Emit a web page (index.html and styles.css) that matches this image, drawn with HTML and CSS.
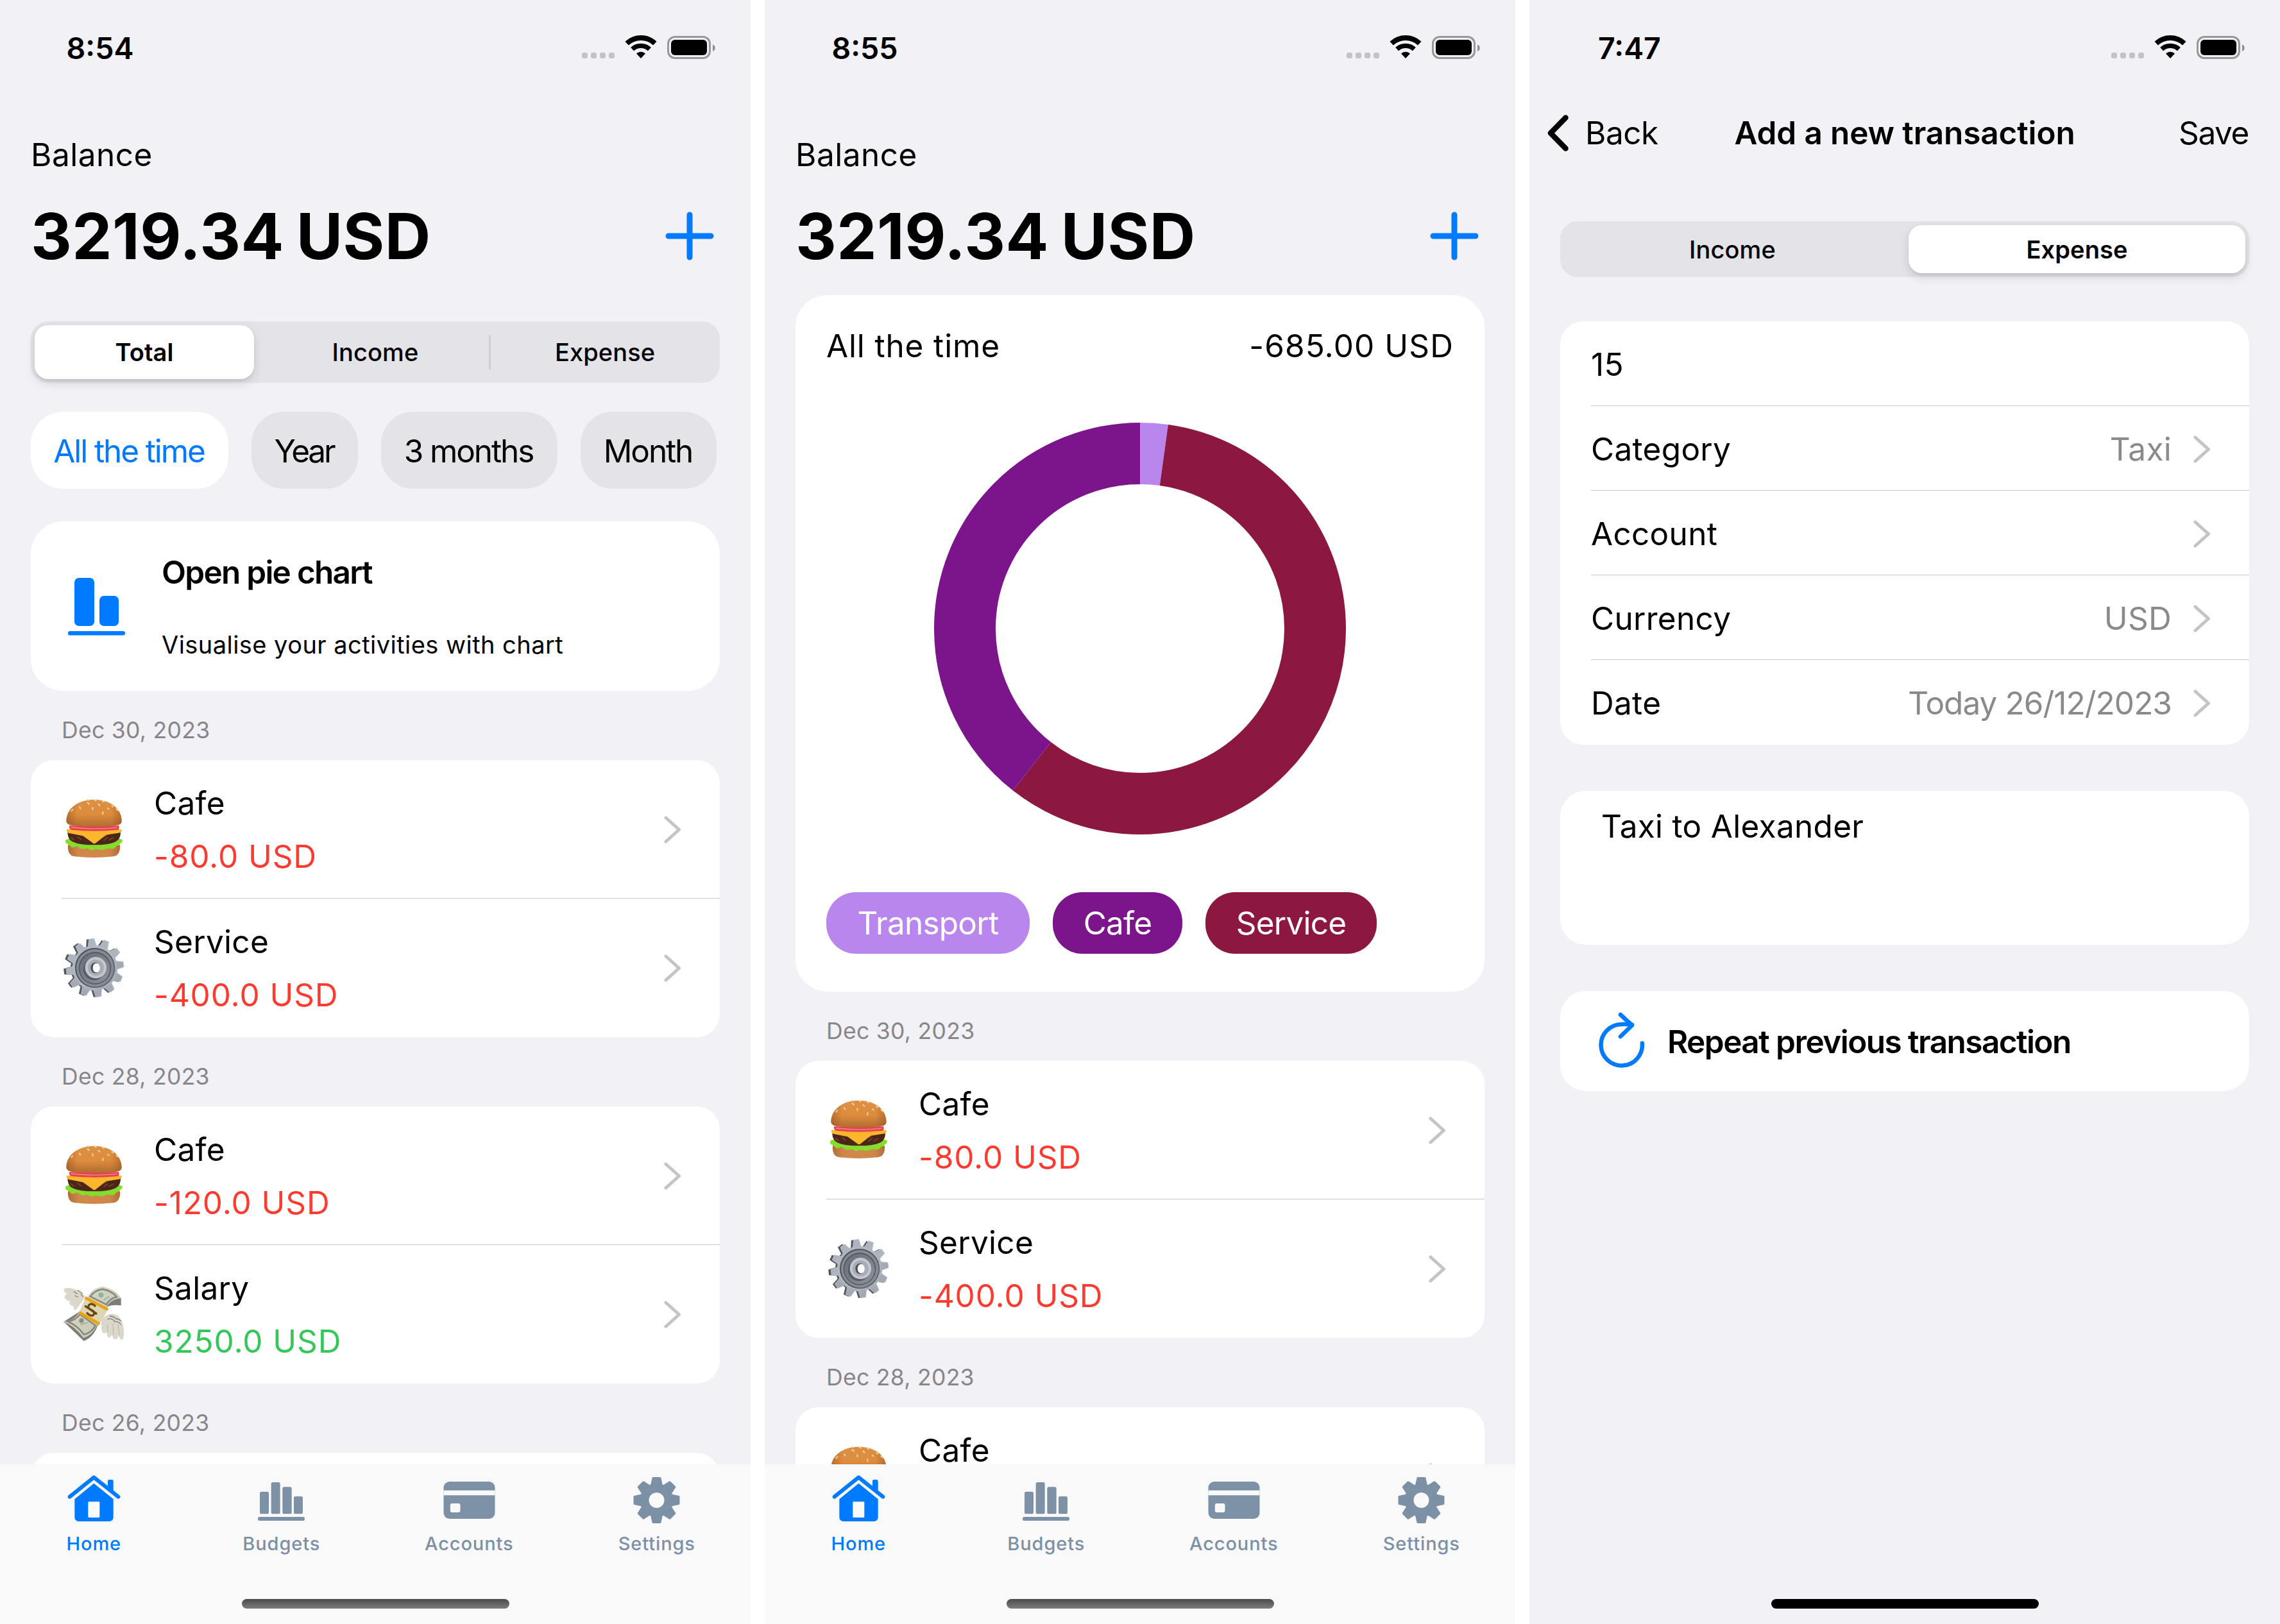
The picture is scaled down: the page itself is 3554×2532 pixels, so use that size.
FILE: index.html
```html
<!DOCTYPE html>
<html lang="en">
<head>
<meta charset="utf-8">
<title>Balance</title>
<link rel="stylesheet" href="styles.css">
</head>
<body>
<svg class="defs" width="0" height="0" aria-hidden="true">
  <defs>
    <linearGradient id="bun" x1="0" y1="0" x2="0" y2="1"><stop offset="0" stop-color="#dc9044"/><stop offset=".55" stop-color="#de8c3c"/><stop offset="1" stop-color="#b06c32"/></linearGradient>
    <linearGradient id="bunSide" x1="0" y1="0" x2="1" y2="0"><stop offset="0" stop-color="#8a4a1c" stop-opacity=".45"/><stop offset=".2" stop-color="#8a4a1c" stop-opacity="0"/><stop offset=".8" stop-color="#8a4a1c" stop-opacity="0"/><stop offset="1" stop-color="#8a4a1c" stop-opacity=".45"/></linearGradient>
    <linearGradient id="steel" x1="0" y1="0" x2="1" y2="1"><stop offset="0" stop-color="#a3adb6"/><stop offset=".5" stop-color="#b4bac3"/><stop offset="1" stop-color="#8f949e"/></linearGradient>
    <linearGradient id="dish" x1="0" y1="0" x2="1" y2="1"><stop offset="0" stop-color="#666d74"/><stop offset="1" stop-color="#8d939a"/></linearGradient>
    <linearGradient id="bill" x1="0" y1="0" x2="1" y2="1"><stop offset="0" stop-color="#dcdcc8"/><stop offset="1" stop-color="#c4c4b4"/></linearGradient>

    <symbol id="status" viewBox="0 0 208 37">
      <g fill="#c3c3c7"><rect x="0" y="27" width="9" height="9" rx="3"/><rect x="14" y="27" width="9" height="9" rx="3"/><rect x="28" y="27" width="9" height="9" rx="3"/><rect x="42" y="27" width="9" height="9" rx="3"/></g>
      <g transform="translate(92 36)"><path d="M-21.8-23.4A32 32 0 0 1 21.8-23.4" fill="none" stroke="#000" stroke-width="8"/><path d="M-13.4-14.4A19.7 19.7 0 0 1 13.4-14.4" fill="none" stroke="#000" stroke-width="7.3"/><path d="M0 0L-7-7.5A10.3 10.3 0 0 1 7-7.5Z"/></g>
      <rect x="134.5" y="2.5" width="65" height="33" rx="10.5" fill="none" stroke="#98989b" stroke-width="3"/>
      <rect x="139" y="7" width="56" height="24" rx="6"/>
      <path d="M204 14.5c5 1.500 5 9 0 10.500z" fill="#8f8f92"/>
    </symbol>

    <symbol id="burger" viewBox="48 69 300 300">
      <path d="M78 292q-4 48 30 54q92 10 182 0q34-6 31-54z" fill="#cf884a"/>
      <path d="M78 292q-4 48 30 54q92 10 182 0q34-6 31-54z" fill="url(#bunSide)"/>
      <path d="M68 268q-6 16 8 20q8 2 12 10q10 12 26 1q10-2 20 8q14 10 28 0q12 2 18 8q14 4 26-4q14 0 22 4q18 2 30-6q10-4 20 1q18 2 26-12q12-4 18-12q12-6 10-18l-20-8H90z" fill="#86dc2c"/>
      <path d="M76 236q0-16 22-20H304q22 4 20 22q-2 30-26 40q-30 14-98 14t-98-14q-24-10-26-42z" fill="#4a2618"/>
      <path d="M92 258l12 10m20-14l14 12m108 4l16-12m10 10l18-10m-40-6l10-8" stroke="#7a4028" stroke-width="6" stroke-linecap="round"/>
      <path d="M71 220q126-20 257 0q4 10-6 15l-66 10l-50 39q-5 3-10 0l-48-34l-68-14q-10-6-9-16z" fill="#fbb62c"/>
      <path d="M84 202H316q4 20-8 20q-106 10-212 0q-14-2-12-20z" fill="#e5424f"/>
      <path d="M92 210q110 12 216 1" stroke="#f58a86" stroke-width="4" fill="none"/>
      <path d="M70 180C72 116 130 80 200 80C270 80 328 116 329 180Q330 196 306 200Q200 213 94 200Q70 196 70 180Z" fill="url(#bun)"/>
      <path d="M70 180C72 116 130 80 200 80C270 80 328 116 329 180Q330 196 306 200Q200 213 94 200Q70 196 70 180Z" fill="url(#bunSide)"/>
      <g fill="none" stroke="#f3d3a4" stroke-width="6" stroke-linecap="round"><path d="M94 134l6-8M132 115l4 7M169 94l8 6M193 118l1 9M220 101l7 6M242 138l-2 10M264 120l4 4M283 108l6 5M203 83l6 2M304 124l7 7M168 81l8 1M240 87l6 3"/></g>
    </symbol>

    <symbol id="cog" viewBox="48 717 300 300">
      <g transform="translate(194 868) rotate(-7)" fill="#4f565d"><circle r="104"/><g id="teethA"><path d="M-20-96L-13-136H13L20-96ZM-20 96L-13 136H13L20 96ZM96-20L136-13V13L96 20ZM-96-20L-136-13V13L-96 20Z"/></g><use href="#teethA" transform="rotate(30)"/><use href="#teethA" transform="rotate(60)"/></g>
      <g transform="translate(204 867) rotate(-7)" fill="url(#steel)" stroke="#b5bcc4" stroke-width="3" stroke-linejoin="round"><circle r="104"/><g id="teethB"><path d="M-20-98L-12-136H12L20-98ZM-20 98L-12 136H12L20 98ZM98-20L134-12V12L98 20ZM-98-20L-134-12V12L-98 20Z"/></g><use href="#teethB" transform="rotate(30)"/><use href="#teethB" transform="rotate(60)"/></g>
      <circle cx="204" cy="867" r="93" fill="#4d5359"/><circle cx="205" cy="868" r="88" fill="#858b92"/><circle cx="204" cy="868" r="76" fill="#54595f"/><circle cx="204" cy="869" r="71" fill="url(#dish)"/>
      <circle cx="200" cy="874" r="51" fill="#575d64"/><circle cx="208" cy="866" r="50" fill="#c3c8d0"/><circle cx="208" cy="866" r="38" fill="#a7adb6"/>
      <ellipse cx="206" cy="867" rx="22" ry="25" fill="#4c5157"/><ellipse cx="211" cy="867" rx="17" ry="22" fill="#fff"/>
    </symbol>

    <symbol id="cash" viewBox="48 117 300 300">
      <path d="M58 302L152 392Q196 376 216 322L240 250Q262 218 326 226V192L240 139L140 250Z" fill="#7a7f76"/>
      <path d="M58 302Q104 300 128 262L172 182Q196 142 242 139Q300 150 326 192Q276 196 256 238L212 322Q190 368 150 378Q110 322 58 302Z" fill="url(#bill)"/>
      <path d="M78 302Q112 296 134 268L206 320Q186 356 152 362Q122 320 78 302ZM182 184Q204 154 240 150Q284 158 306 186Q272 194 258 222Z" fill="none" stroke="#85857c" stroke-width="7"/>
      <circle cx="141" cy="297" r="11" fill="#8c8f86"/><circle cx="232" cy="177" r="12" fill="#8fb59d"/><path d="M136 316l34-10m74-104l26-18" stroke="#9fb5a0" stroke-width="6"/>
      <path d="M162 184L268 240L222 320L128 264Z" fill="#ddd6b4"/><path d="M162 184L268 240L262 252L155 196ZM133 252L228 306L222 320L127 264Z" fill="#eaa413"/>
      <path d="M204 228q-16-16-28-4q-8 14 10 22q20 10 12 24q-12 10-30-8M160 230l50 34" fill="none" stroke="#6b4a10" stroke-width="10" stroke-linecap="round"/>
      <path d="M160 186Q132 150 84 144Q56 142 58 154Q60 168 74 172Q58 182 64 192Q72 206 88 206Q80 216 90 224Q102 226 106 236Q104 248 112 248Q126 236 136 218Z" fill="#dbd8cb"/>
      <path d="M104 160l18 12m-12 8l16 8m-4-34l24 16m-8 2l10 14" stroke="#8b897f" stroke-width="4"/>
      <path d="M236 290Q262 262 292 266Q328 272 338 330Q342 380 332 386Q324 390 314 366Q310 388 296 384Q288 382 284 362Q274 382 266 374Q260 370 260 350Q246 362 240 352Q230 340 236 290Z" fill="#dbd8cb"/>
      <path d="M262 290q24-6 34 12q16-4 30 14m-54-40q20 0 30 12q14 0 24 12" fill="none" stroke="#7d7b72" stroke-width="4"/>
      <path d="M262 318l2 34m24-40l2 50m22-50l6 54" stroke="#b9b6a8" stroke-width="3"/>
    </symbol>

    <symbol id="home" viewBox="70 54 255 237"><path d="M84 161L197 70L311 161" fill="none" stroke="currentColor" stroke-width="18" stroke-linecap="round" stroke-linejoin="round"/><path d="M262 118V87q0-6 6-6h14q6 0 6 6v56zM197 98L288 172V256q0 20-20 20H127q-20 0-20-20V172z" fill="currentColor"/><rect x="170" y="184" width="54" height="74" rx="4" fill="#f9f9f9"/></symbol>
    <symbol id="budgets" viewBox="948 54 255 237"><g fill="currentColor"><rect x="975" y="137" width="42" height="104" rx="8"/><rect x="1028" y="93" width="42" height="148" rx="8"/><rect x="1081" y="115" width="43" height="126" rx="8"/><rect x="1134" y="159" width="42" height="82" rx="8"/><rect x="966" y="255" width="219" height="18" rx="8"/></g></symbol>
    <symbol id="accounts" viewBox="145.500 54 255 237"><rect x="153" y="90" width="240" height="174" rx="28" fill="currentColor"/><rect x="153" y="131" width="240" height="23" fill="#f9f9f9"/><rect x="184" y="192" width="47" height="42" rx="9" fill="#f9f9f9"/></symbol>
    <symbol id="settings" viewBox="1024.500 54 255 237"><g transform="translate(1152 177)" fill="currentColor" stroke="currentColor" stroke-width="10" stroke-linejoin="round"><circle r="73"/><g id="teethC"><path d="M-23-72L-16-103H16L23-72ZM-23 72L-16 103H16L23 72ZM72-23L103-16V16L72 23ZM-72-23L-103-16V16L-72 23Z"/></g><use href="#teethC" transform="rotate(45)"/></g><circle cx="1152" cy="177" r="36" fill="#f9f9f9"/></symbol>
    <symbol id="plus" viewBox="0 0 76 76"><path d="M38 5V71M5 38H71" stroke="#007aff" stroke-width="9" stroke-linecap="round"/></symbol>
    <symbol id="chevron" viewBox="0 0 27 43"><path d="M3 3L23.500 21.500L3 40" fill="none" stroke="#c4c4c6" stroke-width="5" stroke-linecap="round" stroke-linejoin="round"/></symbol>
  </defs>
</svg>

<main class="screens">
  <section class="phone">
    <header class="status"><span class="time">8:54</span><svg class="status-icons"><use href="#status"/></svg></header>
    <div class="content">
      <p class="balance">Balance</p>
      <div class="amount-row"><h1 class="amount">3219.34 USD</h1><svg class="plus"><use href="#plus"/></svg></div>
      <div class="segments three"><span class="segment active">Total</span><span class="segment">Income</span><span class="segment divided">Expense</span></div>
      <div class="chips"><span class="chip all selected">All the time</span><span class="chip year">Year</span><span class="chip quarter">3 months</span><span class="chip month">Month</span></div>
      <div class="promo">
        <svg class="promo-icon" viewBox="0 0 90 90"><g fill="#007aff"><rect x="10" y="0" width="31" height="75" rx="7"/><rect x="49" y="28" width="30" height="47" rx="7"/><rect x="0" y="83" width="89" height="6.500" rx="3"/></g></svg>
        <div><h2 class="promo-title">Open pie chart</h2><p class="promo-text">Visualise your activities with chart</p></div>
      </div>
      <h3 class="date">Dec 30, 2023</h3>
      <ul class="list">
        <li class="row"><svg class="emoji"><use href="#burger"/></svg><div class="row-text"><p>Cafe</p><p class="out">-80.0 USD</p></div><svg class="chevron"><use href="#chevron"/></svg></li>
        <li class="row"><svg class="emoji"><use href="#cog"/></svg><div class="row-text"><p>Service</p><p class="out">-400.0 USD</p></div><svg class="chevron"><use href="#chevron"/></svg></li>
      </ul>
      <h3 class="date">Dec 28, 2023</h3>
      <ul class="list">
        <li class="row"><svg class="emoji"><use href="#burger"/></svg><div class="row-text"><p>Cafe</p><p class="out">-120.0 USD</p></div><svg class="chevron"><use href="#chevron"/></svg></li>
        <li class="row"><svg class="emoji"><use href="#cash"/></svg><div class="row-text"><p>Salary</p><p class="in">3250.0 USD</p></div><svg class="chevron"><use href="#chevron"/></svg></li>
      </ul>
      <h3 class="date">Dec 26, 2023</h3>
      <ul class="list"><li class="row"></li></ul>
    </div>
    <nav class="tabs">
      <div class="tab current"><svg><use href="#home"/></svg><span>Home</span></div>
      <div class="tab"><svg><use href="#budgets"/></svg><span>Budgets</span></div>
      <div class="tab"><svg><use href="#accounts"/></svg><span>Accounts</span></div>
      <div class="tab"><svg><use href="#settings"/></svg><span>Settings</span></div>
    </nav>
    <div class="handle"></div>
  </section>

  <section class="phone">
    <header class="status"><span class="time">8:55</span><svg class="status-icons"><use href="#status"/></svg></header>
    <div class="content">
      <p class="balance">Balance</p>
      <div class="amount-row"><h1 class="amount">3219.34 USD</h1><svg class="plus"><use href="#plus"/></svg></div>
      <div class="chart-card">
        <div class="chart-head"><span>All the time</span><span class="total">-685.00 USD</span></div>
        <svg class="donut" viewBox="-321 -321 642 642">
          <g fill="none" stroke-width="96" transform="rotate(-90)">
            <circle r="273" pathLength="685" stroke="#b886ec" stroke-dasharray="15 670"/>
            <circle r="273" pathLength="685" stroke="#8c1740" stroke-dasharray="400 285" stroke-dashoffset="-15"/>
            <circle r="273" pathLength="685" stroke="#7c158b" stroke-dasharray="270 415" stroke-dashoffset="-415"/>
          </g>
        </svg>
        <div class="legend"><span class="pill transport">Transport</span><span class="pill cafe">Cafe</span><span class="pill service">Service</span></div>
      </div>
      <h3 class="date">Dec 30, 2023</h3>
      <ul class="list">
        <li class="row"><svg class="emoji"><use href="#burger"/></svg><div class="row-text"><p>Cafe</p><p class="out">-80.0 USD</p></div><svg class="chevron"><use href="#chevron"/></svg></li>
        <li class="row"><svg class="emoji"><use href="#cog"/></svg><div class="row-text"><p>Service</p><p class="out">-400.0 USD</p></div><svg class="chevron"><use href="#chevron"/></svg></li>
      </ul>
      <h3 class="date">Dec 28, 2023</h3>
      <ul class="list">
        <li class="row"><svg class="emoji"><use href="#burger"/></svg><div class="row-text"><p>Cafe</p></div><svg class="chevron"><use href="#chevron"/></svg></li>
      </ul>
    </div>
    <nav class="tabs">
      <div class="tab current"><svg><use href="#home"/></svg><span>Home</span></div>
      <div class="tab"><svg><use href="#budgets"/></svg><span>Budgets</span></div>
      <div class="tab"><svg><use href="#accounts"/></svg><span>Accounts</span></div>
      <div class="tab"><svg><use href="#settings"/></svg><span>Settings</span></div>
    </nav>
    <div class="handle"></div>
  </section>

  <section class="phone form">
    <header class="status"><span class="time">7:47</span><svg class="status-icons"><use href="#status"/></svg></header>
    <nav class="navbar">
      <span class="back"><svg viewBox="0 0 33 57"><path d="M28.500 4.500L5 28.500L28.500 52.500" fill="none" stroke="#000" stroke-width="8.500" stroke-linecap="round" stroke-linejoin="round"/></svg><span>Back</span></span>
      <h1 class="nav-title">Add a new transaction</h1>
      <span class="save">Save</span>
    </nav>
    <div class="content">
      <div class="segments two"><span class="segment">Income</span><span class="segment active">Expense</span></div>
      <ul class="fields">
        <li class="field"><span>15</span></li>
        <li class="field"><span>Category</span><span class="value">Taxi</span><svg class="chevron"><use href="#chevron"/></svg></li>
        <li class="field"><span>Account</span><span class="value"></span><svg class="chevron"><use href="#chevron"/></svg></li>
        <li class="field"><span>Currency</span><span class="value">USD</span><svg class="chevron"><use href="#chevron"/></svg></li>
        <li class="field"><span>Date</span><span class="value today">Today 26/12/2023</span><svg class="chevron"><use href="#chevron"/></svg></li>
      </ul>
      <p class="note">Taxi to Alexander</p>
      <div class="repeat">
        <svg viewBox="0 0 72 87"><g fill="none" stroke="#007aff" stroke-width="6.500" stroke-linecap="round" stroke-linejoin="round"><path d="M67.800 48.500A32.200 32.200 0 1 1 35.600 19Q44 18.500 52 19.800"/><path d="M34 4L52 20.500L34 38"/></g></svg>
        <span>Repeat previous transaction</span>
      </div>
    </div>
    <div class="handle dark"></div>
  </section>
</main>
</body>
</html>
```
FILE: styles.css
```css
* { box-sizing: border-box; margin: 0; padding: 0; }
body { width: 3554px; height: 2532px; overflow: hidden; background: #fff; font-family: Inter, "Liberation Sans", sans-serif; font-size: 49.5px; line-height: 60px; letter-spacing: .3px; color: #000; }
ul { list-style: none; }
svg { display: block; flex: none; }
.defs { position: absolute; }
.screens { display: flex; gap: 22px; height: 2532px; }
.phone { display: flex; flex-direction: column; width: 1170px; height: 2532px; background: #f2f1f6; overflow: hidden; white-space: nowrap; }

.status { display: flex; justify-content: space-between; align-items: center; height: 150px; padding: 0 55px 0 101px; flex: none; }
.time { width: 110px; text-align: center; font-size: 46.5px; font-weight: 600; letter-spacing: 0; }
.status-icons { width: 208px; height: 37px; margin-top: -3px; }

.content { flex: 1; min-height: 0; overflow: hidden; padding: 0 48px; }
.balance { margin-top: 61px; letter-spacing: .5px; }
.amount-row { display: flex; justify-content: space-between; align-items: center; height: 120px; margin-top: 37px; padding-right: 9px; }
.amount { font-size: 99px; font-weight: 700; line-height: 120px; letter-spacing: .4px; word-spacing: -5px; }
.plus { width: 76px; height: 76px; }

.segments { display: grid; background: #e4e3e8; border-radius: 27px; font-size: 38px; font-weight: 500; letter-spacing: .1px; }
.three { grid-template-columns: repeat(3, 358px); height: 96px; margin-top: 73px; }
.two { grid-template-columns: repeat(2, 537px); height: 87px; margin-top: 78px; }
.segment { display: flex; align-items: center; justify-content: center; }
.segment.active { margin: 6px; background: #fff; border-radius: 21px; font-weight: 600; box-shadow: 0 6px 16px rgba(0, 0, 0, .13), 0 3px 3px rgba(0, 0, 0, .05); }
.three .active { margin-right: 10px; }
.divided::before { content: ""; width: 3px; height: 54px; margin-right: 100px; margin-left: -103px; background: #cfced4; border-radius: 2px; }

.chips { display: flex; gap: 36px; margin-top: 45px; }
.chip { display: flex; align-items: center; justify-content: center; height: 120px; padding: 1px 2px 0 0; border-radius: 50px; background: #e4e3e8; letter-spacing: -2.1px; }
.chip.selected { background: #fff; color: #007aff; }
.all { width: 308px; }
.year { width: 166px; letter-spacing: -3.200px; }
.quarter { width: 275px; }
.month { width: 212px; }

.promo { display: flex; height: 264px; margin-top: 51px; background: #fff; border-radius: 50px; }
.promo-icon { width: 90px; height: 90px; margin: 88px 56px 0 58px; }
.promo-title { font-size: 49.5px; font-weight: 600; margin-top: 49px; letter-spacing: -1.74px; }
.promo-text { font-size: 38px; margin-top: 53px; letter-spacing: .45px; }

.date { height: 108px; padding: 32px 48px 0; font-size: 35.5px; font-weight: 400; letter-spacing: .3px; color: #86868b; }
.list, .fields { background: #fff; border-radius: 36px; }
.row { display: flex; align-items: center; height: 216px; padding: 0 60px 0 48px; }
.row:not(:last-child), .field:not(:last-child) { background: linear-gradient(#c6c6c8, #c6c6c8) 48px 100% / 100% 1px no-repeat; }
.emoji { width: 100px; height: 100px; }
.row-text { flex: 1; align-self: flex-start; display: grid; gap: 23px; margin: 37px 0 0 44px; }
.out, .in { letter-spacing: .9px; }
.out { color: #ff3b30; }
.in { color: #34c759; }
.chevron { width: 27px; height: 43px; }

.tabs { display: grid; grid-template-columns: repeat(4, 1fr); height: 210px; padding-top: 15px; background: #f9f9f9; flex: none; font-size: 29px; font-weight: 500; line-height: 36px; letter-spacing: .9px; color: #7c90a6; }
.tab { display: flex; flex-direction: column; align-items: center; gap: 12px; }
.tab svg { width: 85px; height: 79px; }
.current { color: #007aff; }
.handle { height: 39px; padding: 0 376px 0 377px; background: #f9f9f9; flex: none; }
.handle::before { content: ""; display: block; height: 15px; border-radius: 8px; background: linear-gradient(#4c4c4c, #7c7c7c); }
.handle.dark { background: none; }
.handle.dark::before { background: #000; }

.chart-card { height: 1086px; margin-top: 32px; padding: 49px 48px 0; background: #fff; border-radius: 50px; }
.chart-head { display: flex; justify-content: space-between; letter-spacing: .85px; }
.total { letter-spacing: 1.1px; }
.donut { width: 642px; height: 642px; margin: 90px auto 0; }
.legend { display: flex; gap: 36px; margin-top: 90px; color: #fff; letter-spacing: -.75px; }
.pill { display: flex; align-items: center; justify-content: center; height: 96px; border-radius: 46px; }
.transport { width: 317px; background: #b886ec; }
.cafe { width: 202px; background: #7c158b; }
.service { width: 267px; background: #8c1740; }

.navbar { display: grid; grid-template-columns: 1fr auto 1fr; align-items: center; height: 120px; margin-top: -3px; padding: 0 49px; flex: none; }
.back { display: flex; align-items: center; gap: 26px; margin-left: -21px; letter-spacing: -.5px; }
.back svg { width: 33px; height: 57px; }
.nav-title { font-size: 49.5px; font-weight: 600; letter-spacing: -.13px; }
.save { text-align: right; letter-spacing: -1.4px; }
.fields { margin-top: 69px; }
.field { display: flex; align-items: center; height: 132px; padding: 2px 60px 0 48px; }
.value { flex: 1; padding-right: 34px; text-align: right; color: #8a8a8e; }
.today { letter-spacing: -.95px; }
.note { height: 240px; margin-top: 72px; padding: 25px 64px; background: #fff; border-radius: 40px; }
.repeat { display: flex; align-items: center; gap: 35px; height: 156px; margin-top: 72px; padding: 1px 60px 0; background: #fff; border-radius: 40px; font-weight: 600; letter-spacing: -1.55px; }
.repeat svg { width: 72px; height: 87px; margin-top: -4px; }
```
